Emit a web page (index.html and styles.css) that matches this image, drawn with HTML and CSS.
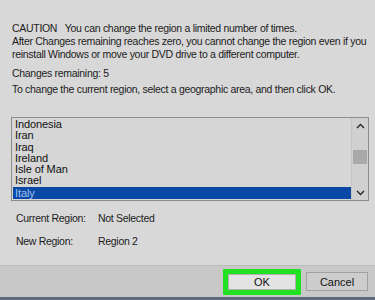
FILE: index.html
```html
<!DOCTYPE html>
<html lang="en">
<head>
    <meta charset="UTF-8">
    <meta name="viewport" content="width=device-width, initial-scale=1.0">
    <title>DVD Region</title>
    <link rel="stylesheet" href="styles.css">
</head>
<body>
    <div class="dialog">
        <div class="content">
            <p class="caution">CAUTION &nbsp; You can change the region a limited number of times.<br>
            After Changes remaining reaches zero, you cannot change the region even if you<br>
            reinstall Windows or move your DVD drive to a different computer.</p>

            <p class="remaining">Changes remaining: 5</p>

            <p class="hint">To change the current region, select a geographic area, and then click OK.</p>

            <div class="listbox">
                <ul class="items">
                    <li>Indonesia</li>
                    <li>Iran</li>
                    <li>Iraq</li>
                    <li>Ireland</li>
                    <li>Isle of Man</li>
                    <li>Israel</li>
                    <li class="selected">Italy</li>
                    <li>Jamaica</li>
                </ul>
                <div class="scrollbar">
                    <svg class="arrow" width="9" height="6" viewBox="0 0 9 6"><path d="M1 5 L4.5 1.5 L8 5" fill="none" stroke="#222" stroke-width="1.3"/></svg>
                    <div class="track"><div class="thumb"></div></div>
                    <svg class="arrow" width="9" height="6" viewBox="0 0 9 6"><path d="M1 1 L4.5 4.5 L8 1" fill="none" stroke="#222" stroke-width="1.3"/></svg>
                </div>
            </div>

            <div class="info">
                <div class="info-row"><span class="label">Current Region:</span><span>Not Selected</span></div>
                <div class="info-row"><span class="label">New Region:</span><span>Region 2</span></div>
            </div>
        </div>

        <div class="footer">
            <div class="highlight"><button class="btn">OK</button></div>
            <button class="btn cancel">Cancel</button>
        </div>
    </div>
</body>
</html>
```

FILE: styles.css
```css
body {
    margin: 0;
    padding: 0;
    font-family: "Liberation Sans", Arial, sans-serif;
    font-size: 10.5px;
    letter-spacing: -0.3px;
    color: #1c1c1c;
    background-color: #d8d8d8;
}

.dialog {
    width: 375px;
    height: 300px;
    display: flex;
    flex-direction: column;
    overflow: hidden;
}

.content {
    flex: 1;
    min-height: 0;
    overflow: hidden;
    padding: 22px 6px 0 12px;
}

p {
    margin: 0;
    white-space: nowrap;
}

.caution {
    line-height: 13px;
}

.remaining {
    margin-top: 6px;
    line-height: 13px;
}

.hint {
    margin-top: 3px;
    line-height: 13px;
}

.listbox {
    margin: 21px 0 0 -1px;
    height: 82px;
    border: 1px solid #8c8c8c;
    display: flex;
    background-color: #d6d6d6;
}

.items {
    flex: 1;
    list-style: none;
    margin: 0;
    padding: 1px 0 0 1px;
    overflow: hidden;
    font-size: 11px;
    letter-spacing: -0.1px;
}

.items li {
    height: 11.3px;
    line-height: 11.3px;
    padding-left: 2px;
    color: #111;
}

.items li.selected {
    background-color: #0a48a6;
    color: #9ec3f2;
    height: 12px;
    line-height: 12px;
}

.scrollbar {
    width: 16px;
    display: flex;
    flex-direction: column;
    align-items: center;
    background-color: #d0d0d0;
    border-left: 1px solid #c4c4c4;
    padding: 5px 0 4px;
}

.track {
    flex: 1;
    width: 100%;
    padding-top: 21px;
}

.thumb {
    width: 14px;
    margin: 0 auto;
    height: 14px;
    background-color: #a9a9a9;
}

.info {
    padding: 11px 0 0 4px;
}

.info-row {
    height: 23px;
    line-height: 13px;
    display: flex;
}

.label {
    width: 82px;
}

.footer {
    flex-shrink: 0;
    height: 31px;
    border-top: 1px solid #bdbdbd;
    border-bottom: 3px solid #5f6a7c;
    background-color: #c8c8c8;
    display: flex;
    justify-content: flex-end;
    align-items: center;
    gap: 5px;
    padding-right: 7px;
}

.highlight {
    border: 5px solid #22e022;
    border-radius: 1px;
    display: flex;
}

.btn {
    font-family: "Liberation Sans", Arial, sans-serif;
    font-size: 11px;
    color: #111;
    background-color: #e3e3e3;
    border: 1px solid #b0b0b0;
    padding: 0;
    width: 68px;
    height: 16px;
}

.cancel {
    width: 62px;
    height: 19px;
    background-color: #cdcdcd;
    border-color: #a0a0a0;
}
```
